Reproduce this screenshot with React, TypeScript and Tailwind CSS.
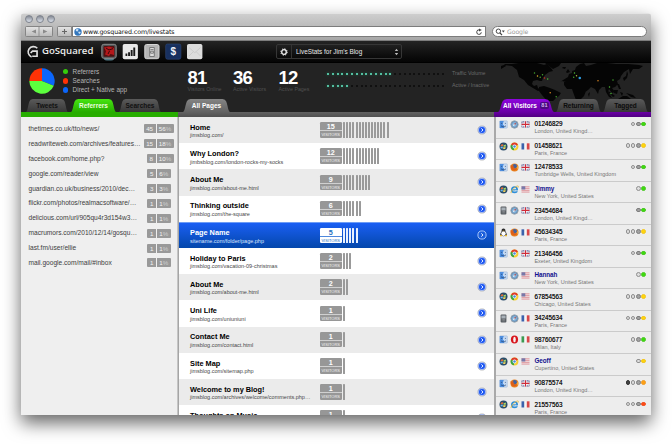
import React from 'react';

const SANS = "font-['Liberation_Sans',sans-serif]";

const referrers: [string, string, string][] = [
  ['thetimes.co.uk/tto/news/', '45', '56'],
  ['readwriteweb.com/archives/features…', '15', '18'],
  ['facebook.com/home.php?', '8', '10'],
  ['google.com/reader/view', '5', '6'],
  ['guardian.co.uk/business/2010/dec…', '3', '3'],
  ['flickr.com/photos/realmacsoftware/…', '1', '1'],
  ['delicious.com/url/905qu4r3d154w3…', '1', '1'],
  ['macrumors.com/2010/12/14/gosqu…', '1', '1'],
  ['last.fm/user/ellie', '1', '1'],
  ['mail.google.com/mail/#inbox', '1', '1'],
];

const pages: [string, string, number, number][] = [
  ['Home', 'jimsblog.com/', 15, 15],
  ['Why London?', 'jimbsblog.com/london-rocks-my-socks', 12, 12],
  ['About Me', 'jimsblog.com/about-me.html', 9, 9],
  ['Thinking outside', 'jimsblog.com/the-square', 6, 6],
  ['Page Name', 'sitename.com/folder/page.php', 5, 5],
  ['Holiday to Paris', 'jimsblog.com/vacation-09-christmas', 2, 3],
  ['About Me', 'jimsblog.com/about-me.html', 2, 2],
  ['Uni Life', 'jimsblog.com/uniuniuni', 1, 1],
  ['Contact Me', 'jimsblog.com/contact.html', 1, 1],
  ['Site Map', 'jimsblog.com/sitemap.php', 1, 1],
  ['Welcome to my Blog!', 'jimsblog.com/archives/welcome/comments.php…', 1, 1],
  ['Thoughts on Music', '', 1, 1],
];

type Visitor = [string, string, string, string, string, string];
// os, browser, flag, name, place, dots (o = hollow, g = grey, k = black, then colour)
const visitors: Visitor[] = [
  ['mac', 'safari', 'uk', '01246829', 'London, United Kingd…', 'ogG'],
  ['win', 'chrome', 'fr', '01458621', 'Paris, France', 'oogY'],
  ['mac', 'firefox', 'uk', '12478533', 'Tunbridge Wells, United Kingdom', 'ogG'],
  ['win', 'ie', 'us', 'Jimmy', 'New York, United States', 'oG'],
  ['phone', 'safari', 'uk', '23454684', 'London, United Kingd…', 'gG'],
  ['linux', 'firefox', 'fr', '45634345', 'Paris, France', 'oogY'],
  ['mac', 'chrome', 'uk', '21346456', 'Exeter, United Kingdom', 'ogG'],
  ['mac', 'safari', 'us', 'Hannah', 'New York, United States', 'oG'],
  ['win', 'chrome', 'us', '67854563', 'Chicago, United States', 'oogY'],
  ['phone', 'safari', 'fr', '34245634', 'Paris, France', 'oogY'],
  ['mac', 'opera', 'it', '98760677', 'Milan, Italy', 'ogG'],
  ['win', 'chrome', 'us', 'Geoff', 'Cupertino, United States', 'oY'],
  ['mac', 'firefox', 'uk', '90875574', 'London, United Kingd…', 'kogO'],
  ['win', 'ie', 'fr', '21557563', 'Paris, France', 'oogR'],
];

function Icon({ kind }: { kind: string }) {
  return (
    <svg viewBox="0 0 9 9" className="h-[9px] w-[9px] shrink-0">
      {kind === 'mac' && (
        <>
          <rect x=".6" y=".8" width="7.8" height="7.4" rx=".8" fill="#c3d8f2" stroke="#9db2ce" strokeWidth=".4" />
          <path d="M.8 1h4.1c-.8 1.6-1 2.7-1 3.9h1c0 1.3.1 2.3.4 3.2H.8z" fill="#4f8fdf" />
          <path d="M2.6 2.9v1M6.4 2.9v1M2 5.8c1.4 1.3 3.7 1.3 5 0" fill="none" stroke="#173660" strokeWidth=".6" />
        </>
      )}
      {kind === 'win' && (
        <>
          <circle cx="4.5" cy="4.5" r="4" fill="#2b4d69" />
          <path d="M1.9 2.7q1.2-.9 2.3-.2L3.9 4.3q-1.1-.6-2.3.1z" fill="#e66a3a" />
          <path d="M4.7 2.7q1.2.6 2.3-.1L6.8 4.4q-1.1.7-2.3.1z" fill="#a8d765" />
          <path d="M1.6 4.9q1.2-.7 2.3-.1l-.3 1.8q-1.1-.6-2 0z" fill="#67b6ee" />
          <path d="M4.4 5q1.2.6 2.3-.1l-.4 1.8q-1 .6-2.2 0z" fill="#f6d75e" />
        </>
      )}
      {kind === 'phone' && (
        <>
          <rect x="1.6" y=".5" width="5.8" height="8" rx="1" fill="#565b60" />
          <rect x="2.4" y="1.5" width="4.2" height="3" fill="#a9b1b8" />
          <path d="M2.8 5.6h3.5M2.8 6.9h3.5" stroke="#c9ccd0" strokeWidth=".6" strokeDasharray=".7 .6" />
        </>
      )}
      {kind === 'linux' && (
        <>
          <path d="M4.5.5c1.5 0 1.9 1 1.9 2.2 0 1.3 1.6 2.2 1.4 4.4-.6 1.4-5.9 1.4-6.6 0C1 5 2.6 4 2.6 2.7c0-1.2.4-2.2 1.9-2.2z" fill="#2b2b2b" />
          <ellipse cx="4.5" cy="5.6" rx="2.2" ry="2.4" fill="#fff" />
          <path d="M3.6 2.7h1.8l-.9.9zM1 7h2v1.3H1zM6 7h2v1.3H6z" fill="#e9b52a" />
        </>
      )}
      {kind === 'safari' && (
        <>
          <circle cx="4.5" cy="4.5" r="3.7" fill="#5f90bd" stroke="#9aa3ac" strokeWidth=".9" />
          <circle cx="4.5" cy="4.5" r="2.4" fill="#86b4da" />
          <path d="M6.4 2.4 5 5.1 3.9 4z" fill="#c2413a" />
          <path d="M2.6 6.6 3.9 4 5 5.1z" fill="#f2f5f8" />
        </>
      )}
      {kind === 'chrome' && (
        <>
          <circle cx="4.5" cy="4.5" r="3.9" fill="#f5cf32" />
          <path d="M4.5 4.5 1 2.7a3.9 3.9 0 0 1 7 0z" fill="#dd3b2c" />
          <path d="M4.5 4.5 1 2.7a3.9 3.9 0 0 0 2.9 5.6z" fill="#36a348" />
          <circle cx="4.5" cy="4.5" r="1.9" fill="#fff" />
          <circle cx="4.5" cy="4.5" r="1.3" fill="#4a88d8" />
        </>
      )}
      {kind === 'firefox' && (
        <>
          <circle cx="4.5" cy="4.5" r="4" fill="#e98220" />
          <circle cx="4.7" cy="3.3" r="2.2" fill="#3d62a4" />
          <path d="M.6 2 1.9 2.7l1.6-.5-.3 1.3 1.5.6-1.4 1c1 1.2 3 .9 4.9-2-.1 4-4 5.6-6.3 3.4C.6 5.2.5 3.6.6 2z" fill="#df5f17" />
          <path d="M7.6 2.4q1 2.2-.5 4.2l-.5-2z" fill="#f6b43a" />
        </>
      )}
      {kind === 'ie' && (
        <>
          <circle cx="4.5" cy="4.7" r="2.7" fill="none" stroke="#2f8fd8" strokeWidth="1.6" />
          <path d="M2.5 4.9h5" stroke="#2f8fd8" strokeWidth="1.2" />
          <path d="M5.3 5.8h2.9" stroke="#ededed" strokeWidth=".8" />
          <path d="M1.1 8.1C.2 6.2 6.7-.1 8.2 1.1c.4.4 0 1.2-.4 1.7" fill="none" stroke="#ecb72e" strokeWidth=".8" />
        </>
      )}
      {kind === 'opera' && (
        <>
          <ellipse cx="4.5" cy="4.5" rx="3.6" ry="4" fill="#d8161d" />
          <ellipse cx="4.5" cy="4.5" rx="1.3" ry="2.8" fill="#f5f5f5" />
        </>
      )}
      {kind === 'uk' && (
        <>
          <rect x=".5" y="1.3" width="8" height="6.2" fill="#59669a" />
          <path d="m.5 1.3 8 6.2m0-6.2-8 6.2" stroke="#eadde0" strokeWidth="1" />
          <path d="M4.5 1.3v6.2M.5 4.4h8" stroke="#fff" strokeWidth="2.5" />
          <path d="M4.5 1.3v6.2M.5 4.4h8" stroke="#cf2b39" strokeWidth="1.1" />
        </>
      )}
      {(kind === 'fr' || kind === 'it') && (
        <>
          <rect x=".5" y="1.3" width="8" height="6.2" fill="#f6f6f6" />
          <rect x=".5" y="1.3" width="2.7" height="6.2" fill={kind === 'fr' ? '#3c62ab' : '#3c9a52'} />
          <rect x="5.8" y="1.3" width="2.7" height="6.2" fill="#d84748" />
        </>
      )}
      {kind === 'us' && (
        <>
          <rect x=".5" y="1.3" width="8" height="6.2" fill="#f2dfe1" />
          <path d="M.5 1.8h8M.5 3.6h8M.5 5.4h8M.5 7.1h8" stroke="#d98a92" strokeWidth=".8" />
          <rect x=".5" y="1.3" width="3.8" height="3.2" fill="#7779aa" />
        </>
      )}
    </svg>
  );
}

const dotClass: Record<string, string> = {
  o: 'bg-[#dedede] border-[#8f8f8f]',
  g: 'bg-[#a2a2a2] border-[#7d7d7d]',
  k: 'bg-[#444] border-[#333]',
  G: 'bg-[#3cdc0c] border-[#4cc826]',
  Y: 'bg-[#ffd60a] border-[#f2c622]',
  O: 'bg-[#ffa012] border-[#ee9a25]',
  R: 'bg-[#ff4a12] border-[#f0552a]',
};

function Tab({ label, w, fill, color, badge }: { label: string; w: string; fill: [string, string]; color: string; badge?: string }) {
  const id = 'tab' + label.replace(' ', '');
  return (
    <div className={`relative flex h-[13px] shrink-0 items-center justify-center text-[6.5px] font-bold whitespace-nowrap ${w} ${color}`}>
      <svg viewBox="0 0 100 26" preserveAspectRatio="none" className="absolute inset-0 h-full w-full">
        <defs>
          <linearGradient id={id} x2="0" y2="1">
            <stop stopColor={fill[0]} />
            <stop offset="1" stopColor={fill[1]} />
          </linearGradient>
        </defs>
        <path d="M0 26C4 24 5 12 8 5Q10 0 16 0H84Q90 0 92 5C95 12 96 24 100 26z" fill={`url(#${id})`} />
      </svg>
      <span className="relative">{label}</span>
      {badge && <span className="relative ml-[3px] rounded-[2px] bg-[#4b0a80] px-[1.5px] text-[5.5px] leading-[7px] text-[#d5b5ee]">{badge}</span>}
    </div>
  );
}

function Browser() {
  return (
    <div className="h-[28px] shrink-0 border-t border-[#e3e3e3] border-b border-b-[#7d7d7d] bg-linear-to-b from-[#cecece] to-[#a7a7a7] pl-[4px]">
      <div className="flex h-[9px] items-center gap-[3px] pt-px">
        {[0, 1, 2].map((i) => (
          <div key={i} className="h-[8px] w-[8px] rounded-full border border-[#7d828c] bg-linear-to-b from-[#858a94] to-[#dce2ec]" />
        ))}
      </div>
      <div className="mt-[3px] flex h-[11px] items-center">
        <div className="flex h-[11px] w-[28px] items-center rounded-[1.5px] border border-[#858585] bg-linear-to-b from-[#e3e3e3] to-[#bcbcbc]">
          <svg viewBox="0 0 26 9" className="h-[9px] w-[26px]">
            <path d="m10 2.4-4.4 2.1L10 6.6zM17 2.4l4.4 2.1L17 6.6z" fill="#8a8a8a" />
            <path d="M13 0v9" stroke="#929292" />
          </svg>
        </div>
        <div className="ml-[4px] flex h-[11px] w-[15px] items-center justify-center rounded-l-[1.5px] border border-[#858585] bg-linear-to-b from-[#e3e3e3] to-[#bcbcbc]">
          <svg viewBox="0 0 7 7" className="h-[7px] w-[7px]"><path d="M3.5 1v5M1 3.5h5" stroke="#666" strokeWidth="1.1" /></svg>
        </div>
        <div className="flex h-[11px] w-[414px] items-center border border-[#7c7c7c] bg-white pl-px">
          <svg viewBox="0 0 8 8" className="h-[8px] w-[8px]">
            <circle cx="4" cy="4" r="3.7" fill="#3377bd" />
            <path d="M2 1.3q2-.8 2.7.4L3.5 3.6 1.8 3zM4.6 3.4l2.2.5-.9 2.2-1.6-1z" fill="#c9e0f4" />
          </svg>
          <span className="ml-px flex-1 font-['DejaVu_Sans',sans-serif] text-[6.3px] tracking-[-0.1px] text-[#111]">www.gosquared.com/livestats</span>
          <svg viewBox="0 0 8 8" className="mr-[2px] h-[8px] w-[8px]">
            <path d="M6.3 4.3A2.3 2.3 0 1 1 4.6 1.9" fill="none" stroke="#444" strokeWidth="1" />
            <path d="M4 .4 6.8 2 4 3.5z" fill="#444" />
          </svg>
        </div>
        <div className="ml-[6px] flex h-[11px] w-[155px] items-center rounded-full border border-[#7c7c7c] bg-white pl-[2px]">
          <svg viewBox="0 0 11 8" className="h-[8px] w-[11px]">
            <circle cx="3.4" cy="3.2" r="2.2" fill="none" stroke="#444" strokeWidth="1" />
            <path d="m5 4.9 2 2.3" stroke="#444" strokeWidth="1.2" />
            <path d="M6.8 2.6h3L8.3 4.5z" fill="#444" />
          </svg>
          <span className="ml-px font-['DejaVu_Sans',sans-serif] text-[6.2px] tracking-[-0.1px] text-[#9b9b9b]">Google</span>
        </div>
      </div>
    </div>
  );
}

function Header() {
  return (
    <div className="flex h-[22px] shrink-0 items-center border-b border-black bg-linear-to-b from-[#242424] to-[#050505] pl-[4px]">
      <svg viewBox="0 0 14 13" className="h-[13px] w-[14px]">
        <path d="M12.3 3.3A5.3 5.3 0 1 0 6.6 11.9" fill="none" stroke="#dedede" strokeWidth="1.6" />
        <path d="M12.9 12H7.2V10.4h4V6.9H7.8L6.2 8.4 5 7.4 7.2 5.3h5.7z" fill="#dedede" />
      </svg>
      <span className="ml-[3px] w-[59px] font-['Open_Sans',sans-serif] text-[9.6px] font-semibold text-[#ececec]">GoSquared</span>
      <svg viewBox="0 0 102 18" className="h-[18px] w-[102px]">
        <ellipse cx="8" cy="16" rx="5" ry="1.6" fill="#507a86" />
        <rect x=".8" y="1.3" width="14.4" height="14" rx="2" fill="#4e5355" stroke="#8b8b8b" />
        <rect x="2.5" y="3" width="11" height="10.7" rx="1" fill="#511010" />
        <path d="M3 4.5 8 3.4l5 1.7v7L9.5 11 8 13 4 11.4 5 8.3z" fill="#b3181b" />
        <path d="m5 5 3 2 4-1.4M7 11l1.5-3" stroke="#360909" strokeWidth="1" fill="none" />
        <rect x="21.7" y="1" width="15.2" height="15.2" rx="1.8" fill="#e9e9e9" />
        <path d="M24.5 13v-2.4h1.8V13zm2.6 0V9.2H29V13zm2.6 0V7h1.9v6zm2.6 0V4.5h1.9V13z" fill="#1c1c1c" />
        <rect x="43.8" y="1.5" width="14.2" height="14.2" rx="1.8" fill="#b5b5b5" stroke="#d7d7d7" />
        <path d="M48.7 4.5h4.6v9h-4.6zM49.6 8.2h2.8v2h-2.8zM49.5 6.6h3" fill="#ddd" stroke="#717171" strokeWidth=".9" />
        <rect x="64.7" y="1" width="15.2" height="15.2" rx="1.8" fill="#18305f" stroke="#304a7a" strokeWidth=".6" />
        <text x="72.3" y="12" textAnchor="middle" fontFamily="Liberation Sans" fontWeight="bold" fontSize="10" fill="#f0f3f8">$</text>
        <rect x="86" y="1" width="15.4" height="15.2" rx="1.8" fill="#dddddd" />
        <path d="m88 4.5 5.8 5.3 5.7-5.3M88 13l4.2-4.2M99.5 13l-4.2-4.2" fill="none" stroke="#c4c4c4" strokeWidth=".7" />
      </svg>
      <div className="ml-[73px] flex h-[15px] w-[126px] items-center rounded-[2px] border border-[#363636] bg-linear-to-b from-[#202020] to-[#090909]">
        <div className="flex h-full w-[15px] items-center justify-center border-r border-[#333]">
          <svg viewBox="0 0 8 8" className="h-[8px] w-[8px]">
            <circle cx="4" cy="4" r="2.3" fill="none" stroke="#f0f0f0" strokeWidth="1.3" />
            <circle cx="4" cy="4" r="3.2" fill="none" stroke="#f0f0f0" strokeWidth="1" strokeDasharray="1.25 1.26" />
          </svg>
        </div>
        <span className="ml-[4px] flex-1 text-[6.4px] text-[#e8e8e8]">LiveStats for Jim's Blog</span>
        <svg viewBox="0 0 5 8" className="mr-[2px] h-[8px] w-[5px]"><path d="m.8 3 1.7-2.3L4.2 3zM.8 5l1.7 2.3L4.2 5z" fill="#bbb" /></svg>
      </div>
    </div>
  );
}

const mapDots: [number, number, string][] = [
  [33.5, 10, '#43a52d'], [36.5, 13, '#e5b52e'], [39.2, 14.2, '#43a52d'], [41.5, 11.8, '#43a52d'], [43.5, 15, '#d2301e'], [46.7, 16, '#4dbb36'],
  [49.2, 29.7, '#e18a23'], [55.2, 33.8, '#43a52d'], [73.5, 10, '#4dbb36'], [75.5, 12.8, '#a8c43b'], [72.7, 14.3, '#43a52d'],
  [97, 17.7, '#e18a23'], [112, 17, '#43a52d'], [108.5, 24, '#4dbb36'], [110, 30.5, '#4dbb36'],
];

function WorldMap() {
  return (
    <svg viewBox="0 0 150 38" className="h-[38px] w-[150px]">
      <path
        d="M0 6 5 3 3 1l8 0 7-1 18 0 7 2 3-1 4 4 2 3-4 1-4 3-2 3-1 3-2 0-3-1-4 1-1 3 2 2 3-1 1 3 3 2-3 1-5-3-5-3-4-5-5-3-2-7-5-4-8-1-6 2z"
        fill="#050505"
      />
      <path
        d="M44 0h16l-2 3-6 3-4-3zM38 24l5-1 6 2 5 2 6 3-2 3-3 2-3 3H46l-5-6-3-4zM62 4l3 0-1 2-3-1zM65 9l2-3 2 3-3 1zM67 14l1-3 3-1 0-2 3-1 1-3 4-3 4-1 2 3 5-1 6-2h10l9 1h12l11 1 4 1-4 3-6 0-3 5-1-5-5 3-3 4-1 3-3 2 1 3-3 3-3 1 3 4-3 1-3-4-1 3 4 6-3-1-3-5-1-5-3 0-3 3-1 4-3-5-4-2-3 3-4 3-3-1-3-5-1-2-5-1 0-3-4-2-2 3-4-1-2 1zM63 19l4-4 6-1 4 3 5 0 3 6 4 1-4 4-2 5-4 4h-4l-3-8-1-3-5 0-3-4zM87 31l2-2-1 5zM106 28l3 1 5 4-2 1zM113 27l4 0-1 4-3-1zM119 29l3 1-1 3zM125 30l7 2 3 3-5-1zM117 36l5-3 4 0 4 3 1 2h-14zM122 15l3-2 1-5 1 3-1 4-3 3zM116 21l2 0 2 5-2 0z"
        fill="#050505"
      />
      {mapDots.map(([x, y, c]) => <circle key={`${x},${y}`} cx={x} cy={y} r=".75" fill={c} />)}
      <circle cx="78.8" cy="15" r="1.3" fill="#2d9be0" />
    </svg>
  );
}

const GREY: [string, string] = ['#5a5a5a', '#383838'];

function Dashboard() {
  return (
    <div className="flex h-[49px] shrink-0 bg-[#232323]">
      <div className="flex w-[157px] flex-col justify-between">
        <div className="flex h-[36px] pt-[4px] pl-[7.5px]">
          <svg viewBox="0 0 26 26" className="mt-[0.5px] h-[26px] w-[26px]">
            <path d="M13 13V.3A12.7 12.7 0 0 1 24.8 17.7z" fill="#0b66fb" />
            <path d="M13 13 24.8 17.7A12.7 12.7 0 0 1 .3 13z" fill="#5cff3e" />
            <path d="M13 13H.3A12.7 12.7 0 0 1 13 .3z" fill="#ff3206" />
          </svg>
          <div className="ml-[8px] flex flex-col text-[6.4px] leading-[9.2px] text-[#b5b5b5]">
            {[['Referrers', 'bg-[#36cc0c]'], ['Searches', 'bg-[#ff3206]'], ['Direct + Native app', 'bg-[#0b66fb]']].map(([t, c]) => (
              <div key={t} className="flex items-center gap-[4.5px]"><i className={`h-[5.6px] w-[5.6px] rounded-full ${c}`} />{t}</div>
            ))}
          </div>
        </div>
        <div className="flex gap-[3px] pl-[5px]">
          <Tab label="Tweets" w="w-[42px]" fill={GREY} color="text-[#111]" />
          <Tab label="Referrers" w="w-[45px]" fill={['#47e512', '#27ad00']} color="text-[#eaffdf]" />
          <Tab label="Searches" w="w-[42px]" fill={GREY} color="text-[#111]" />
        </div>
      </div>
      <div className="flex w-[316px] flex-col justify-between">
        <div className="flex h-[36px] pt-[6px] pl-[9.5px]">
          {[['81', 'Visitors Online'], ['36', 'Active Visitors'], ['12', 'Active Pages']].map(([n, t]) => (
            <div key={n} className="w-[45.5px] whitespace-nowrap">
              <div className="text-[18.5px] leading-[18px] font-bold tracking-[-0.7px] text-white">{n}</div>
              <div className="text-[5.3px] leading-[5px] text-[#515151]">{t}</div>
            </div>
          ))}
          <div className="ml-[3px] flex flex-col gap-[2px]">
            {[['Traffic Volume', 14], ['Active / Inactive', 5]].map(([t, n]) => (
              <div key={t} className="flex h-[10px] items-center">
                <div className="flex w-[125px] gap-[2.8px]">
                  {Array.from({ length: 25 }, (_, i) => (
                    <i key={i} className={`h-[2px] w-[2px] shrink-0 rounded-full ${i < Number(n) ? 'bg-[#65edc8] shadow-[0_0_3px_#1d8a5b]' : 'bg-[#0b0b0b]'}`} />
                  ))}
                </div>
                <span className="text-[5.3px] whitespace-nowrap text-[#6a6a6a]">{t}</span>
              </div>
            ))}
          </div>
        </div>
        <div className="flex pl-[5px]"><Tab label="All Pages" w="w-[47px]" fill={['#858585', '#626262']} color="text-white" /></div>
      </div>
      <div className="flex w-[157px] flex-col justify-between">
        <div className="h-[36px] pl-[7px]"><WorldMap /></div>
        <div className="relative flex gap-[2px] pl-[4px]">
          <Tab label="All Visitors" w="w-[56px]" fill={['#8d05dd', '#6900a5']} color="text-white" badge="81" />
          <Tab label="Returning" w="w-[45px]" fill={GREY} color="text-[#0c0c0c]" />
          <Tab label="Tagged" w="w-[45px]" fill={GREY} color="text-[#0c0c0c]" />
        </div>
      </div>
    </div>
  );
}

function Pages() {
  return (
    <div className="w-[316px] shrink-0 overflow-hidden border-l border-[#a5a5a5]">
      {pages.map(([title, url, n, bars], i) => {
        const on = i === 4;
        const bg = on ? 'bg-linear-to-b from-[#1a5ff4] to-[#0447ab] border-t border-[#6d9cf5]' : i % 2 ? 'bg-white' : 'bg-[#ebebeb]';
        return (
          <div key={i} className={`flex h-[26.2px] items-center pl-[11px] ${bg} ${on ? 'text-white' : 'text-black'}`}>
            <div className="h-[14.5px] w-[129.5px] pt-px whitespace-nowrap">
              <div className="text-[7.35px] leading-[8.5px] font-bold">{title}</div>
              <div className={`text-[5.5px] leading-[6px] ${on ? 'text-[#dce7fc]' : 'text-[#484848]'}`}>{url}</div>
            </div>
            <div className={`w-[22.5px] overflow-hidden rounded-[1.2px] text-center ${on ? 'bg-white text-[#256fbd]' : 'bg-[#979797] text-white'}`}>
              <div className="h-[8px] text-[7.2px] leading-[9.5px] font-bold">{n}</div>
              <div className={`h-[7.6px] border-t text-[4px] leading-[7.4px] ${on ? 'border-[#4f88dd] text-[#256fbd]' : 'border-[#d0d0d0] text-[#f2f2f2]'}`}>VISITORS</div>
            </div>
            <div className="ml-[1.2px] flex h-[15.6px] flex-1 gap-[1.1px]">
              {Array.from({ length: bars }, (_, k) => <i key={k} className={`h-full w-[2px] rounded-[0.6px] ${on ? 'bg-[#e9f1ff]' : 'bg-[#9a9a9a]'}`} />)}
            </div>
            <svg viewBox="0 0 10 10" className="mr-[7.5px] h-[10px] w-[10px]">
              <circle cx="5" cy="5" r="4.1" fill={on ? '#1c5fdc' : '#1f59f2'} stroke={on ? '#b8d0fa' : '#bababa'} strokeWidth=".9" />
              {!on && <circle cx="5" cy="5" r="3.6" fill="none" stroke="#f3f6ff" strokeWidth=".5" />}
              <path d="M4.3 3.4 6 5 4.3 6.6" fill="none" stroke="#fff" strokeWidth=".9" />
            </svg>
          </div>
        );
      })}
    </div>
  );
}

export default function App() {
  return (
    <div className={`h-[444px] w-[672px] overflow-hidden bg-white pt-[13px] pl-[21px] ${SANS}`}>
      <div className="h-[402px] w-[630px] rounded-t-[3px] shadow-[0_8px_18px_rgba(0,0,0,0.6)]">
        <div className="flex h-full w-full flex-col overflow-hidden rounded-t-[3px]">
          <Browser />
          <Header />
          <Dashboard />
          <div className="flex h-[5px] shrink-0">
            <div className="w-[157px] bg-[#27ad00]" />
            <div className="w-[316px] bg-linear-to-b from-[#626262] to-[#505050]" />
            <div className="w-[157px] bg-linear-to-b from-[#6900a5] to-[#500080]" />
          </div>
          <div className="flex min-h-0 flex-1">
            <div className="w-[157px] shrink-0 border-r border-[#c5c5c5] bg-[#efefef] pt-[4.5px] pl-[7.5px]">
              {referrers.map(([t, a, b], i) => (
                <div key={t} className="flex h-[14.9px] items-center">
                  <span className="flex-1 text-[6.6px] whitespace-nowrap text-[#3d3d3d]">{t}</span>
                  <span className={`flex gap-[0.8px] text-[6.2px] leading-[9px] text-[#f3f3f3] ${i < 3 ? 'mr-[3.5px]' : 'mr-[6.5px]'}`}>
                    <i className={`h-[9px] rounded-l-[1px] bg-[#999] text-center not-italic ${a.length > 1 ? 'w-[12.2px]' : 'w-[8.8px]'}`}>{a}</i>
                    <i className={`h-[9px] rounded-r-[1px] bg-[#999] text-center not-italic ${i < 3 ? 'w-[17px]' : 'w-[13.5px]'}`}>{b}<b className="font-normal text-[#cecece]">%</b></i>
                  </span>
                </div>
              ))}
            </div>
            <Pages />
            <div className="w-[157px] shrink-0 overflow-hidden border-l-2 border-[#a9a9a9] bg-[#ededed]">
              {visitors.map(([os, br, flag, name, place, dots]) => (
                <div key={name} className="flex h-[21.55px] items-start border-b border-[#cbcbcb] pt-[3px] pr-[5px] pl-[3px]">
                  <div className="flex gap-[2.2px]"><Icon kind={os} /><Icon kind={br} /><Icon kind={flag} /></div>
                  <div className="ml-[4px] flex-1 pt-[0.4px] whitespace-nowrap">
                    <div className={`text-[6.3px] leading-[8px] ${/\d/.test(name) ? 'text-[#151515] [text-shadow:0_0_0.5px_#333]' : 'font-bold text-[#11118e]'}`}>{name}</div>
                    <div className="text-[5.5px] leading-[6px] text-[#777]">{place}</div>
                  </div>
                  <div className="flex w-0 justify-end gap-[0.7px] pt-[1.6px]">
                    {[...dots].map((d, i) => <i key={i} className={`h-[4.6px] w-[4.6px] shrink-0 rounded-full border ${dotClass[d]}`} />)}
                  </div>
                </div>
              ))}
            </div>
          </div>
        </div>
      </div>
    </div>
  );
}
